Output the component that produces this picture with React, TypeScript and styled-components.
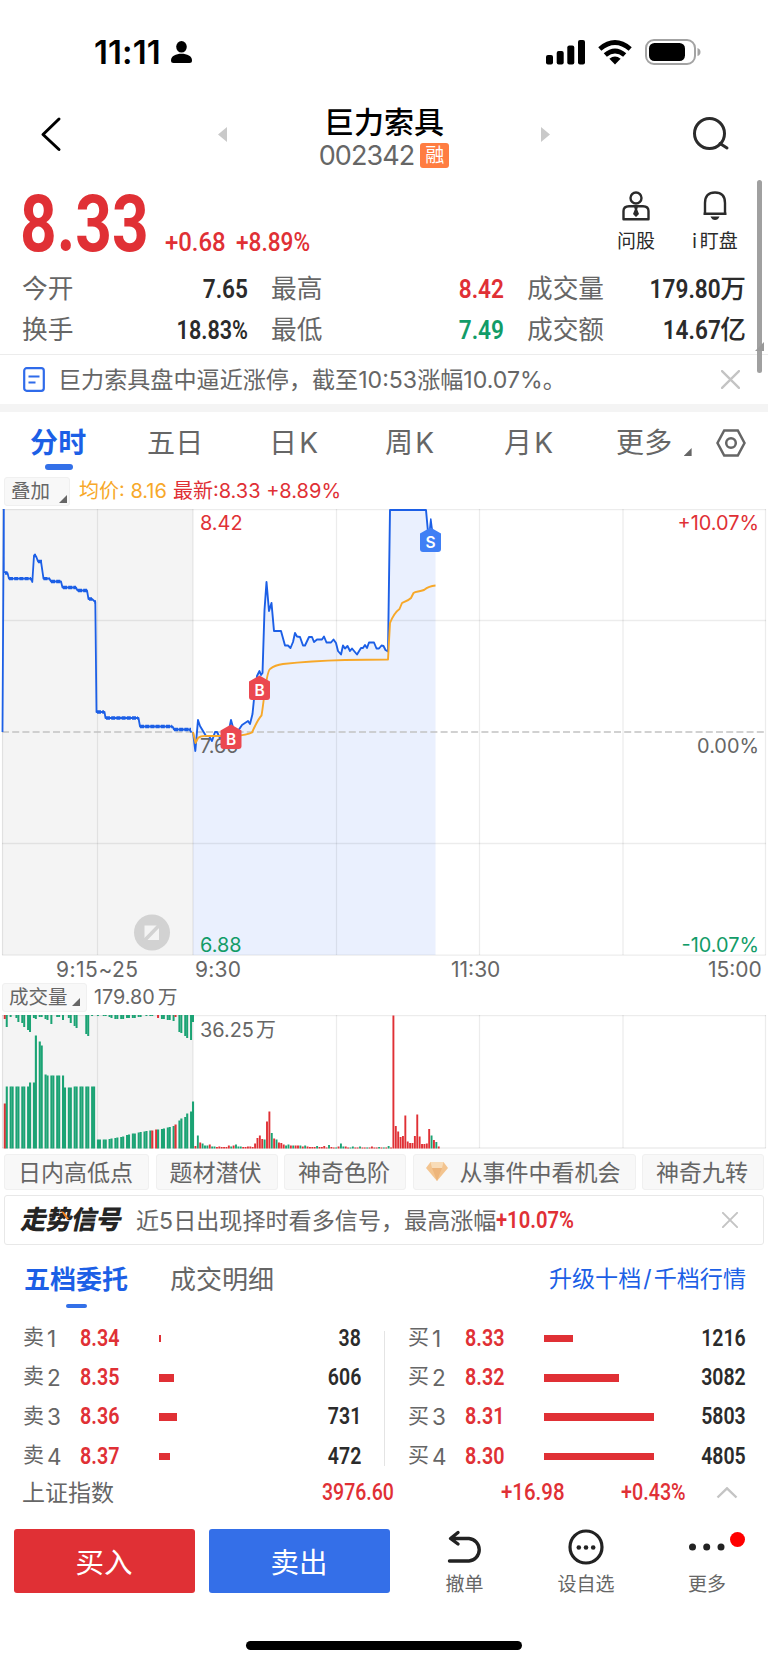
import React from 'react';
import styled, { createGlobalStyle, css } from 'styled-components';

const RED = '#e03035';
const GREEN = '#129c68';
const BLUE = '#1c5fe6';
const GREY = '#666';
const DARK = '#2b2b2b';
const SANS = `Inter, "Noto Sans CJK SC", sans-serif`;

const GlobalStyle = createGlobalStyle`
  * { box-sizing: border-box; }
  body { margin: 0; background: #fff; font-family: ${SANS}; color: ${GREY}; }
  svg { display: block; flex: none; }
`;

const Page = styled.main`
  position: relative;
  display: flex;
  flex-direction: column;
  width: 768px;
  height: 1665px;
  overflow: hidden;
  background: #fff;
  white-space: nowrap;
`;

/* Condensed figures used for every quote */
const Num = styled.span<{ $size?: number; $color?: string; $from?: 'left' | 'right'; $squeeze?: number; $weight?: number }>`
  display: inline-block;
  font-family: Roboto, "Noto Sans CJK SC", sans-serif;
  font-size: ${p => p.$size ?? 26}px;
  font-weight: ${p => p.$weight ?? 600};
  line-height: 1;
  color: ${p => p.$color ?? DARK};
  transform: scaleX(${p => p.$squeeze ?? 0.87});
  transform-origin: ${p => p.$from ?? 'right'} center;
`;

const StatusBar = styled.header`
  display: flex;
  align-items: center;
  height: 104px;
  padding: 0 67px 0 94px;
  justify-content: space-between;
`;
const StatusSide = styled.div<{ $gap: number }>`
  display: flex;
  align-items: center;
  gap: ${p => p.$gap}px;
`;
const Clock = styled.span`
  color: #000;
  font-size: 33px;
  font-weight: 600;
  line-height: 36px;
  letter-spacing: 0.1px;
  width: 69px;
`;

const TitleBar = styled.nav`
  display: flex;
  align-items: center;
  height: 76px;
  padding: 0 38px 16px 40px;
`;
const TitleBlock = styled.div`
  display: flex;
  flex-direction: column;
  align-items: center;
  width: 314px;
  padding-top: 9px;
`;
const StockName = styled.h1`
  margin: 0;
  color: #000;
  font-size: 30px;
  font-weight: 500;
  line-height: 34px;
`;
const CodeLine = styled.div`
  display: flex;
  align-items: center;
  gap: 6px;
  height: 33px;
  font-size: 27px;
  font-weight: 400;
  letter-spacing: -0.9px;
`;
const MarginTag = styled.span`
  width: 29px;
  height: 25px;
  border-radius: 3px;
  background: #ff7d41;
  color: #fff;
  font-size: 19px;
  line-height: 25px;
  letter-spacing: 0;
  text-align: center;
`;
const Spacer = styled.div<{ $w?: number }>`
  ${p => (p.$w ? css`width: ${p.$w}px; flex: none;` : css`flex: 1;`)}
`;

const Quote = styled.section`
  display: flex;
  height: 86px;
  padding: 5px 13px 0 20px;
`;
const Price = styled.div`
  width: 145px;
`;
const Change = styled.div`
  display: flex;
  width: 200px;
  align-items: flex-start;
  padding-top: 44px;
`;
const ChangeItem = styled.div`width: 71px;`;
const Tool = styled.div<{ $w: number }>`
  display: flex;
  flex-direction: column;
  align-items: center;
  width: ${p => p.$w}px;
  padding-top: 6px;
  gap: 10px;
  font-size: 19px;
  line-height: 22px;
  color: ${DARK};
  b { margin-right: 3px; font-weight: 400; }
`;

const Stats = styled.section`
  display: grid;
  grid-template-columns: 226px 233px 219px;
  column-gap: 23px;
  grid-template-rows: 41px 41px;
  height: 89px;
  padding: 2px 0 0 22px;
  border-bottom: 1px solid #ececec;
`;
const Stat = styled.div`
  display: flex;
  align-items: center;
  justify-content: space-between;
  font-size: 25.7px;
  line-height: 30px;
`;
const Value = styled.span<{ $color?: string }>`
  display: flex;
  align-items: center;
  color: ${p => p.$color ?? DARK};
  font-weight: 500;
`;

const News = styled.section`
  display: flex;
  align-items: center;
  height: 49px;
  padding: 0 28px 0 23px;
  font-size: 23.1px;
`;
const NewsText = styled.span`
  flex: 1;
  padding: 0 0 3px 13px;
`;
const Band = styled.div`
  height: 8px;
  background: #f4f4f4;
`;

const PeriodTabs = styled.nav`
  display: flex;
  height: 63px;
  padding: 13px 22px 0 30px;
  font-size: 28px;
  line-height: 36px;
`;
const PeriodTab = styled.div<{ $w: number; $active?: boolean }>`
  position: relative;
  width: ${p => p.$w}px;
  letter-spacing: 0.3px;
  > b { margin-left: 2px; font-weight: 400; }
  > i { margin-left: 11px; vertical-align: -3px; }
  ${p => p.$active && css`
    color: ${BLUE};
    font-weight: 600;
    &::after {
      content: '';
      position: absolute;
      left: 15px;
      top: 39px;
      width: 28px;
      height: 6px;
      border-radius: 3px;
      background: #3370e8;
    }
  `}
`;
const Corner = styled.i`
  display: inline-block;
  width: 8px;
  height: 8px;
  background: ${GREY};
  clip-path: polygon(100% 0, 100% 100%, 0 100%);
`;

const Legend = styled.div<{ $h: number; $top: number; $size: number }>`
  display: flex;
  align-items: flex-start;
  height: ${p => p.$h}px;
  padding: ${p => p.$top}px 2px 0;
  font-size: ${p => p.$size}px;
  line-height: 29px;
`;
const PickButton = styled.div<{ $w: number; $ml: number; $right: number; $bottom: number }>`
  display: flex;
  align-items: flex-end;
  width: ${p => p.$w}px;
  height: 29px;
  margin-left: ${p => p.$ml}px;
  padding-left: 6px;
  border: 1px solid #f0f0f0;
  border-radius: 3px;
  background: #f8f8f8;
  font-size: 19.5px;
  line-height: 27px;
  > i { margin: 0 ${p => p.$right}px ${p => p.$bottom}px auto; }
`;
const LegendText = styled.span<{ $color?: string; $ml: number }>`
  margin-left: ${p => p.$ml}px;
  color: ${p => p.$color ?? GREY};
  > b { margin-left: 3px; font-weight: 400; }
`;
const Axis = styled.div`
  display: flex;
  height: 27px;
  padding: 0 4px 0 56px;
  font-size: 21px;
  line-height: 28px;
`;
const AxisLabel = styled.span<{ $w: number; $ls?: number }>`
  width: ${p => p.$w}px;
  letter-spacing: ${p => p.$ls ?? 0}px;
`;

const Chips = styled.div`
  display: flex;
  justify-content: space-between;
  padding: 5px 4px 0;
  height: 46px;
`;
const Chip = styled.div<{ $w: number }>`
  display: flex;
  align-items: center;
  justify-content: center;
  gap: 12px;
  width: ${p => p.$w}px;
  height: 36px;
  padding: 0 2px 2px 0;
  border: 1px solid #f0f0f0;
  border-radius: 3px;
  background: #f8f8f8;
  font-size: 23px;
`;
const Signal = styled.section`
  display: flex;
  align-items: center;
  height: 50px;
  margin: 0 4px;
  padding: 0 25px 0 17px;
  border: 1px solid #e8e8e8;
  border-radius: 3px;
  font-size: 23.1px;
`;
const SignalLogo = styled.div`
  position: relative;
  width: 114px;
  color: #252525;
  font-size: 26px;
  font-weight: 900;
  line-height: 30px;
  span { display: inline-block; transform: skewX(-12deg) scaleX(0.98); transform-origin: left center; letter-spacing: -0.4px; }
  svg { position: absolute; left: 38px; top: 6px; }
`;
const SignalText = styled.span`padding-bottom: 2px;`;
const SignalGain = styled.span`
  display: flex;
  padding-top: 2px;
`;

const BookTabs = styled.nav`
  display: flex;
  align-items: center;
  height: 69px;
  padding: 0 22px 5px 24px;
  font-size: 26px;
`;
const BookTab = styled.div<{ $active?: boolean; $w: number }>`
  position: relative;
  width: ${p => p.$w}px;
  ${p => p.$active && css`
    color: ${BLUE};
    font-weight: 600;
    &::after {
      content: '';
      position: absolute;
      left: 42px;
      top: 45px;
      width: 21px;
      height: 4px;
      border-radius: 2px;
      background: #3370e8;
    }
  `}
`;
const Upgrade = styled.a`
  margin-left: auto;
  color: ${BLUE};
  font-size: 23.1px;
  > b { margin: 0 2px; font-weight: 400; }
`;

const Book = styled.section`
  display: grid;
  grid-template-columns: 361px 362px;
  height: 152px;
  overflow: hidden;
  padding: 5px 0 0 23px;
`;
const BookSide = styled.div<{ $divided?: boolean }>`
  position: relative;
  padding-left: ${p => (p.$divided ? 24 : 0)}px;
  ${p => p.$divided && css`
    &::before { content: ''; position: absolute; left: 0; top: 12px; width: 1px; bottom: 0; background: #e4e4e4; }
  `}
`;
const Level = styled.div`
  display: flex;
  align-items: center;
  height: 39.3px;
`;
const LevelName = styled.span`
  display: flex;
  align-items: center;
  width: 57px;
  font-size: 21px;
  line-height: 26px;
  span { padding-bottom: 3px; }
  b { margin-left: 3px; font-size: 22.5px; font-weight: 400; }
`;
const Depth = styled.span`width: 146px;`;
const Bar = styled.i`
  display: block;
  height: 7.5px;
  background: ${RED};
`;
const Cell = styled.span<{ $w: number; $end?: boolean }>`
  display: flex;
  width: ${p => p.$w}px;
  justify-content: ${p => (p.$end ? 'flex-end' : 'flex-start')};
`;

const IndexRow = styled.section`
  display: flex;
  align-items: center;
  height: 53px;
  padding: 0 30px 0 22px;
  font-size: 23px;
`;
const IndexName = styled.span`
  width: 300px;
  padding-bottom: 4px;
`;

const ActionBar = styled.footer`
  display: flex;
  height: 122px;
  padding: 10px 0 0 14px;
`;
const Trade = styled.button<{ $bg: string }>`
  flex: none;
  width: 181px;
  height: 64px;
  margin: 0 14px 0 0;
  padding: 0 1px 2px 0;
  border: 0;
  border-radius: 3px;
  background: ${p => p.$bg};
  color: #fff;
  font-family: ${SANS};
  font-size: 28.5px;
`;
const Action = styled.div<{ $w: number }>`
  position: relative;
  display: flex;
  flex-direction: column;
  align-items: center;
  width: ${p => p.$w}px;
  gap: 8px;
  font-size: 19px;
  line-height: 24px;
`;
const Dot = styled.i`
  position: absolute;
  right: 22px;
  top: 3px;
  width: 15px;
  height: 15px;
  border-radius: 50%;
  background: #f00;
`;
const HomeBar = styled.div`
  width: 276px;
  height: 9px;
  margin: 0 auto;
  border-radius: 5px;
  background: #000;
`;
const ScrollThumb = styled.div`
  position: absolute;
  left: 757px;
  top: 180px;
  width: 5px;
  height: 193px;
  border-radius: 3px;
  background: #a0a0a0;
`;
const ExpandMark = styled.i`
  position: absolute;
  left: 755px;
  top: 342px;
  width: 9px;
  height: 9px;
  background: #999;
  clip-path: polygon(100% 0, 100% 100%, 0 100%);
`;

const Cross = ({ size, color = '#c4c4c4' }: { size: number; color?: string }) => (
  <svg width={size} height={size} viewBox="0 0 18 18" fill="none" stroke={color} strokeWidth="2.2" strokeLinecap="round">
    <path d="M1 1 17 17M17 1 1 17" />
  </svg>
);

const Marker = ({ x, y, label, color }: { x: number; y: number; label: string; color: string }) => (
  <g transform={`translate(${x} ${y})`}>
    <path d="M0-14.5 10.5-8.5V7a3 3 0 0 1-3 3h-15a3 3 0 0 1-3-3V-8.5Z" fill={color} />
    <text x="0" y="5.8" textAnchor="middle" fontFamily={SANS} fontWeight="600" fontSize="15.5" fill="#fff">{label}</text>
  </g>
);

const AUCTION =
  'M2.5 732 3.8 509V572L7.5 573 9 578.7H31L32.3 582 34 555.5 36 556 38 561.5H41L43.5 578.7H49.5L51 581.5H61L62.5 587.5H76L77.5 590.5H87L88.5 599H92L95.3 602 96.5 712H104.5L105.5 718H138.5L140 726.5H172.5L174 729.5H189.5L191.5 732.5';
const AUCTION_DOTS =
  'M5 573H7.500M9 578.7H31M34 555.5H36M38 561.5H42M43.500 578.7H49.5M51 581.5H61M63 587.5H76M78 590.5H87M89 599H92M94.500 602H96M97 712H104M106 718H138M140 726.5H172M174 729.5H191';

const SESSION: [number, number][] = [
  [193, 732], [195.3, 751], [198, 720], [200, 726], [203, 731], [206, 736], [209, 736], [212, 741], [215, 732], [217, 732], [220, 738],
  [224, 737], [228, 735], [231, 720], [234, 731], [238, 731], [242, 725], [245, 723], [248, 721], [250, 724], [252.5, 714],
  [254, 699], [257, 676], [259.5, 671], [261, 675], [262.5, 673], [264.5, 610], [266.5, 582], [269, 611], [271.5, 603],
  [274, 631], [281, 631], [285, 645.5], [288, 645.5], [290.5, 648], [293, 642], [295, 633], [297, 636.5], [300, 637],
  [303, 645.5], [305, 645.5], [309, 637], [312, 637], [314, 642], [317, 639.5], [322, 639.5], [324, 636.5], [326.5, 642.5],
  [331, 642.5], [333.5, 639.5], [336, 643], [338, 651], [341, 654.5], [343, 645.5], [345, 648.5], [347.5, 646], [350, 651],
  [352, 648.5], [357, 654.5], [361, 648], [363, 648], [365, 645], [367, 648], [369, 642.5], [374, 642.5], [376.5, 648.5],
  [379, 648.5], [381.5, 645.5], [383.5, 646], [385.5, 650], [388, 651.5], [390, 510], [426, 510], [428, 532],
];
const AVERAGE =
  'M193 732 195.5 743 198 738Q201 735.5 208 736H235Q247 735 252 732.5Q258 719 261.5 715.5C264 702 266 672 270 669Q275 665 283 664Q310 661 345 660L388 659.5 390 623Q394 613 399.500 609L402 603C404 602 408 601 411 598L413.500 593C416 591 419 592 424 590Q429 586 435.500 585.500';

const line = (pts: [number, number][]) => 'M' + pts.map(p => p.join(' ')).join('L');

const PriceChart = () => (
  <svg width="768" height="447" viewBox="0 509 768 447" fontFamily={SANS} fontSize="19.9">
    <rect x="2" y="509" width="191" height="446" fill="#f4f4f4" />
    <path d={line(SESSION) + 'L430.500 518 433 532H435.500V955H193Z'} fill="#eaf0fe" />
    <g stroke="#000" strokeOpacity=".075" strokeWidth="1.3" fill="none">
      <path d="M2 509.700H766M2 620.500H766M2 843.500H766M2 955.200H766" />
      <path d="M2.500 509V955M97.500 509V955M193 509V955M336.500 509V955M479.500 509V955M623 509V955M765.500 509V955" />
    </g>
    <path d="M2 732H766" stroke="#c2c2c2" strokeWidth="1.500" strokeDasharray="7 3.200" />
    <text x="200" y="753" fill={GREY}>7.65</text>
    <g fill="none" strokeLinejoin="round">
      <path d={AUCTION} stroke={BLUE} strokeWidth="1.800" />
      <path d={AUCTION_DOTS} stroke={BLUE} strokeWidth="3.300" strokeDasharray="4 1.200" />
      <path d={line(SESSION)} stroke={BLUE} strokeWidth="1.900" />
      <path d="M429.500 532 430.800 519 432.500 532" stroke={BLUE} fill={BLUE} strokeWidth="1.500" />
      <path d={AVERAGE} stroke="#f7a829" strokeWidth="1.900" />
    </g>
    <text x="200" y="530" fill={RED}>8.42</text>
    <text x="200" y="952" fill={GREEN}>6.88</text>
    <g textAnchor="end">
      <text x="759" y="530" fill={RED}>+10.07%</text>
      <text x="759" y="753" fill={GREY}>0.00%</text>
      <text x="759" y="952" fill={GREEN}>-10.07%</text>
    </g>
    <Marker x={231} y={739} label="B" color="#eb4850" />
    <Marker x={259.500} y={690} label="B" color="#eb4850" />
    <Marker x={430.500} y={542} label="S" color="#3f7ff5" />
    <circle cx="152" cy="932.500" r="18" fill="#d2d2d2" />
    <path d="M144.500 938.500V925.500H157ZM159 926.500V940H147Z" fill="#f4f4f4" />
    <path d="M143.500 941.500 160.500 924" stroke="#d2d2d2" strokeWidth="3.500" />
  </svg>
);

/* Call-auction bars: matched volume rises from the bottom, unmatched hangs from the top */
const AUCTION_UP: number[] = [
  45, 62, 62, 62, 62, 62, 62, 62, 62, 62, 62, 62, 62, 66, 66, 66, 113, 66, 107, 103, 66, 74, 73, 73, 73, 73, 73, 73, 73, 73, 73,
  61, 61, 61, 61, ...Array(13).fill(62), ...Array(6).fill(9), 9.5, 10, 10, 10.500, 11, 11, 11.500, 12, 13, 13.500,
  14, 14.500, 15, 15, 15.500, 16, 16.500, 17, 17, 17.500, 18, 18, 18, 18.500, 19, 19, 19, 19.500, 20, 20.500, 21, 21.500, 22, 22.500, 24,
  25, 28, 30, 31, 31.500, 35, 36, 37, 47,
];
const AUCTION_DOWN: Record<number, number> = {
  0: 4, 1: 12, 3: 2, 6: 3, 7: 7, 9: 8, 10: 12, 12: 15, 13: 17, 15: 3, 16: 4, 18: 2, 19: 2, 21: 4, 22: 5, 24: 9, 27: 2, 28: 2, 30: 5, 33: 3,
  34: 8, 36: 11, 37: 13, 42: 19, 43: 21, 45: 1, 48: 1, 51: 1, 52: 1, 54: 2, 55: 3, 57: 4, 58: 4, 60: 4, 61: 4, 63: 3, 64: 3, 66: 3, 67: 3,
  69: 2, 70: 2, 73: 1, 75: 1, 76: 1, 79: 3, 81: 4, 82: 4, 84: 5, 85: 5, 87: 6, 88: 2, 90: 17, 91: 18, 93: 21, 94: 23, 96: 25, 97: 7,
};
const AUCTION_RED = [0, 76, 78, 88];
const AUCTION_DOWN_RED = [0, 79, 88];

const VOLUME =
  'r2.5 g13 r6 g5 g3 g3 r4 g2 g2 r1.5 r2 r1.5 r1.5 r1.5 r3 g2 r3 g4 g2 g2 r1.5 r1.5 r2 r2 r1.5 r5 r10.5 r13 r9.5 g9 r27 r37 g15.5 r10 g9 r6 r5.5 r4 g3 g4 r3 g3 r3 r3 g3 r2 g3 r2 r1.5 r1.5 r1.5 g2.5 r1.5 r1.5 r2.5 r1 g3.5 r1.5 r1 g1 r2 g5 g2 r2 r1 g1 g2 r1 r1 g2 r1 r1 g1 r1 r2 r1 r1 g1.5 r1 g1 r1 g2.5 r1 r133 r22.5 r17 r11.5 r12.5 r33 r7 r5.5 r5.5 r12.5 r34 r12 r4.5 r4.5 r5 r19.5 g13 r8.5 g6.5 r2';

const VolumeChart = () => (
  <svg width="768" height="134" viewBox="0 1015 768 134" fontFamily={SANS} fontSize="19.9">
    <rect x="2" y="1015" width="191" height="133" fill="#f4f4f4" />
    <g stroke="#000" strokeOpacity=".075" strokeWidth="1.300">
      <path d="M2 1015.500H766M2 1148H766" />
      <path d="M2.500 1015V1148M97.500 1015V1148M193 1015V1148M336.500 1015V1148M479.500 1015V1148M623 1015V1148M765.500 1015V1148" />
    </g>
    {AUCTION_UP.map((h, i) => i % 3 !== 2 && (
      <rect key={i} x={3.800 + i * 1.94} y={1148.500 - h} width={2.100} height={h} fill={AUCTION_RED.includes(i) ? RED : '#1ba374'} />
    ))}
    {Object.entries(AUCTION_DOWN).map(([k, h]) => (
      <rect key={k} x={3.800 + Number(k) * 1.94} y={1015} width={2} height={h} fill={AUCTION_DOWN_RED.includes(Number(k)) ? RED : '#1ba374'} />
    ))}
    {VOLUME.split(' ').map((v, i) => {
      const h = Number(v.slice(1));
      return <rect key={i} x={194.500 + i * 2.385} y={1148.500 - h} width={1.900} height={h} fill={v[0] === 'r' ? RED : '#1ba374'} />;
    })}
    <text x="200" y="1037" fill={GREY}>36.25<tspan dx="2">万</tspan></text>
  </svg>
);

const SELL: [string, string, number, string][] = [['1', '8.34', 1.5, '38'], ['2', '8.35', 14.5, '606'], ['3', '8.36', 17.5, '731'], ['4', '8.37', 11, '472']];
const BUY: [string, string, number, string][] = [['1', '8.33', 29, '1216'], ['2', '8.32', 75, '3082'], ['3', '8.31', 110, '5803'], ['4', '8.30', 110, '4805']];

const Levels = ({ name, rows }: { name: string; rows: typeof SELL }) => (
  <>
    {rows.map(([n, price, width, qty]) => (
      <Level key={n}>
        <LevelName><span>{name}</span><b>{n}</b></LevelName>
        <Cell $w={79}><Num $size={23.5} $color={RED} $from="left" $squeeze={0.84}>{price}</Num></Cell>
        <Depth><Bar style={{ width }} /></Depth>
        <Cell $w={56} $end><Num $size={23.5} $squeeze={0.83}>{qty}</Num></Cell>
      </Level>
    ))}
  </>
);

export default function App() {
  return (
    <Page>
      <GlobalStyle />
      <StatusBar>
        <StatusSide $gap={8}>
          <Clock>11:11</Clock>
          <svg width="21" height="22" viewBox="0 0 21 22" fill="#000"><ellipse cx="10.500" cy="5.800" rx="5.300" ry="5.800" /><path d="M0 19.500C0 15 5 12.800 10.500 12.800S21 15 21 19.500Q21 22 18.500 22H2.500Q0 22 0 19.500Z" /></svg>
        </StatusSide>
        <StatusSide $gap={13}>
          <svg width="39" height="25" viewBox="0 0 39 25" fill="#000"><rect y="15" width="7" height="9.500" rx="2" /><rect x="10.700" y="11" width="7" height="13.500" rx="2" /><rect x="21.300" y="5.500" width="7" height="19" rx="2" /><rect x="32" width="7" height="24.500" rx="2" /></svg>
          <svg width="34" height="25" viewBox="0 0 34 25" fill="none" stroke="#000" strokeWidth="4.800"><path d="M1.800 9Q17-3.800 32.200 9" /><path d="M7.300 15Q17 6.800 26.700 15" /><path d="M17 24.500 11.400 18.700Q17 14.200 22.600 18.700Z" fill="#000" stroke="none" /></svg>
          <svg width="56" height="26" viewBox="0 0 56 26"><rect x="1" y="1" width="49" height="24" rx="8" fill="none" stroke="#a3a3a3" strokeWidth="2" /><rect x="4" y="4" width="36" height="18" rx="5.500" /><path d="M52.500 9Q55.500 10 55.500 13T52.500 17Z" fill="#a3a3a3" /></svg>
        </StatusSide>
      </StatusBar>

      <TitleBar>
        <svg width="22" height="36" viewBox="0 0 22 36" fill="none" stroke="#000" strokeWidth="3" strokeLinecap="round" strokeLinejoin="round"><path d="M19 3 3 18.500 19 33.500" /></svg>
        <Spacer $w={156} />
        <svg width="9" height="15" viewBox="0 0 9 15" fill="#c9c9c9"><path d="M9 0V15L0 7.500Z" /></svg>
        <TitleBlock>
          <StockName>巨力索具</StockName>
          <CodeLine>002342<MarginTag>融</MarginTag></CodeLine>
        </TitleBlock>
        <svg width="9" height="15" viewBox="0 0 9 15" fill="#c9c9c9"><path d="M0 0V15L9 7.500Z" /></svg>
        <Spacer />
        <svg width="37" height="34" viewBox="0 0 37 34" fill="none" stroke="#2b2b2b" strokeWidth="3"><circle cx="16.500" cy="16.500" r="15" /><path d="M27 26.500 34 31" strokeLinecap="round" /></svg>
      </TitleBar>

      <Quote>
        <Price><Num $size={79} $color={RED} $from="left" $squeeze={0.81} $weight={700}>8.33</Num></Price>
        <Change>
          <ChangeItem><Num $color={RED} $from="left" $weight={500} $squeeze={0.92}>+0.68</Num></ChangeItem>
          <Num $color={RED} $from="left" $weight={500} $squeeze={0.87}>+8.89%</Num>
        </Change>
        <Spacer />
        <Tool $w={78}>
          <svg width="28" height="30" viewBox="0 0 28 30" fill="none" stroke={DARK} strokeWidth="2.400"><circle cx="14" cy="7" r="5.500" /><path d="M1.500 28.200V20Q1.500 15.200 7 15.200H21Q26.500 15.200 26.500 20V28.200Z" strokeLinejoin="round" /><path d="M12 15.500H16L15.200 18.500 17 23 14 26 11 23 12.800 18.500Z" fill={DARK} stroke="none" /></svg>
          问股
        </Tool>
        <Tool $w={80}>
          <svg width="26" height="30" viewBox="0 0 26 30" fill="none" stroke={DARK} strokeWidth="2.400"><path d="M3 22.500V12Q3 1.500 13 1.500T23 12V22.500M1.500 22.800H24.500" /><path d="M8.500 25.500H17.500Q16 29 13 29T8.500 25.500Z" fill={DARK} stroke="none" /></svg>
          <span><b>i</b>盯盘</span>
        </Tool>
      </Quote>

      <Stats>
        <Stat>今开<Num>7.65</Num></Stat>
        <Stat>最高<Num $color={RED}>8.42</Num></Stat>
        <Stat>成交量<Value><Num>179.80</Num>万</Value></Stat>
        <Stat>换手<Num $squeeze={0.83}>18.83%</Num></Stat>
        <Stat>最低<Num $color={GREEN}>7.49</Num></Stat>
        <Stat>成交额<Value><Num>14.67</Num>亿</Value></Stat>
      </Stats>

      <News>
        <svg width="22" height="25" viewBox="0 0 22 25" fill="none" stroke="#2f6bea" strokeWidth="2.200"><rect x="1.200" y="1.200" width="19.600" height="22.600" rx="2.500" /><path d="M5.500 9.500H16.500M5.500 15.500H12.500" /></svg>
        <NewsText>巨力索具盘中逼近涨停，截至10:53涨幅10.07%。</NewsText>
        <Cross size={19} />
      </News>
      <Band />

      <PeriodTabs>
        <PeriodTab $w={117} $active>分时</PeriodTab>
        <PeriodTab $w={122}>五日</PeriodTab>
        <PeriodTab $w={116}>日<b>K</b></PeriodTab>
        <PeriodTab $w={119}>周<b>K</b></PeriodTab>
        <PeriodTab $w={112}>月<b>K</b></PeriodTab>
        <PeriodTab $w={100}>更多<Corner /></PeriodTab>
        <svg width="30" height="36" viewBox="0 0 30 36" fill="none" stroke={GREY} strokeWidth="2.500"><path d="M8.200 5.500H21.800L28.500 18 21.800 30.500H8.200L1.500 18Z" /><circle cx="15" cy="18" r="4.800" /></svg>
      </PeriodTabs>

      <Legend $h={34} $top={2} $size={20}>
        <PickButton $w={66} $ml={2} $right={2} $bottom={2}>叠加<Corner /></PickButton>
        <LegendText $ml={9} $color="#f7a829">均价: 8.16</LegendText>
        <LegendText $ml={6} $color={RED}>最新:8.33 +8.89%</LegendText>
      </Legend>
      <PriceChart />
      <Axis>
        <AxisLabel $w={139} $ls={0.5}>9:15~25</AxisLabel>
        <AxisLabel $w={256} $ls={0.2}>9:30</AxisLabel>
        <AxisLabel $w={257}>11:30</AxisLabel>
        <AxisLabel $w={56}>15:00</AxisLabel>
      </Axis>
      <Legend $h={32} $top={0} $size={19.8}>
        <PickButton $w={85} $ml={0} $right={6} $bottom={5}>成交量<Corner /></PickButton>
        <LegendText $ml={7}>179.80<b>万</b></LegendText>
      </Legend>
      <VolumeChart />

      <Chips>
        <Chip $w={145}>日内高低点</Chip>
        <Chip $w={122}>题材潜伏</Chip>
        <Chip $w={122}>神奇色阶</Chip>
        <Chip $w={223}>
          <svg width="22" height="19" viewBox="0 0 22 19"><path d="M4.500 0H17.500L22 6 11 19 0 6Z" fill="#f3c48f" /><path d="M4.500 0H17.500L16 6H6Z" fill="#f8dcb8" /><path d="M6 6H16L11 19Z" fill="#edb57b" /></svg>
          从事件中看机会
        </Chip>
        <Chip $w={122}>神奇九转</Chip>
      </Chips>

      <Signal>
        <SignalLogo>
          <span>走势信号</span>
          <svg width="10" height="10" viewBox="0 0 10 10"><path d="M1 0 4 1 9 8 6.500 8Z" fill="#f58220" /></svg>
        </SignalLogo>
        <SignalText>近5日出现择时看多信号，最高涨幅</SignalText>
        <SignalGain><Num $size={23.5} $color={RED} $from="left" $squeeze={0.86}>+10.07%</Num></SignalGain>
        <Spacer />
        <Cross size={16} />
      </Signal>

      <BookTabs>
        <BookTab $active $w={146}>五档委托</BookTab>
        <BookTab $w={110}>成交明细</BookTab>
        <Upgrade>升级十档<b>/</b>千档行情</Upgrade>
      </BookTabs>

      <Book>
        <BookSide><Levels name="卖" rows={SELL} /></BookSide>
        <BookSide $divided><Levels name="买" rows={BUY} /></BookSide>
      </Book>

      <IndexRow>
        <IndexName>上证指数</IndexName>
        <Cell $w={179}><Num $size={23.5} $color={RED} $from="left" $weight={500} $squeeze={0.83}>3976.60</Num></Cell>
        <Cell $w={120}><Num $size={23.5} $color={RED} $from="left" $weight={500}>+16.98</Num></Cell>
        <Cell $w={64}><Num $size={23.5} $color={RED} $from="left" $weight={500} $squeeze={0.84}>+0.43%</Num></Cell>
        <Spacer />
        <svg width="22" height="12" viewBox="0 0 22 12" fill="none" stroke="#c4c4c4" strokeWidth="2.400"><path d="M1.500 10.500 11 1.300 20.500 10.500" /></svg>
      </IndexRow>

      <ActionBar>
        <Trade $bg={RED}>买入</Trade>
        <Trade $bg="#346fe8">卖出</Trade>
        <Action $w={121}>
          <svg width="36" height="36" viewBox="0 0 36 36" fill="none" stroke="#222" strokeWidth="3.400" strokeLinecap="round" strokeLinejoin="round"><path d="M11 3.500 3.500 9.500 11 15M4 9.500H22A11.300 11.300 0 0 1 22 32H2.500" /></svg>
          撤单
        </Action>
        <Action $w={122}>
          <svg width="36" height="36" viewBox="0 0 36 36"><circle cx="18" cy="18" r="16" fill="none" stroke="#222" strokeWidth="3.200" /><g fill="#222"><circle cx="10.800" cy="18.500" r="2.300" /><circle cx="18" cy="18.500" r="2.300" /><circle cx="25.200" cy="18.500" r="2.300" /></g></svg>
          设自选
        </Action>
        <Action $w={120}>
          <svg width="38" height="36" viewBox="0 0 38 36" fill="#222"><circle cx="4.500" cy="18" r="3.500" /><circle cx="18.700" cy="18" r="3.500" /><circle cx="33" cy="18" r="3.500" /></svg>
          更多
          <Dot />
        </Action>
      </ActionBar>
      <HomeBar />
      <ScrollThumb />
      <ExpandMark />
    </Page>
  );
}
